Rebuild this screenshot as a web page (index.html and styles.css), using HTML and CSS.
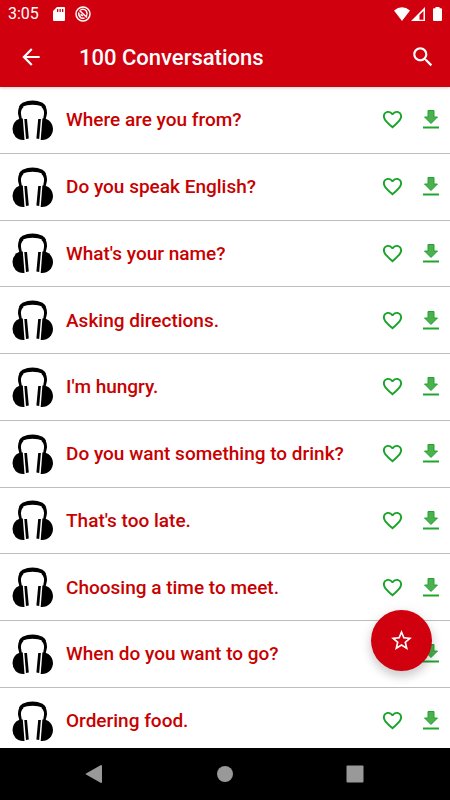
FILE: index.html
```
<!DOCTYPE html>
<html lang="en">

<head>
    <meta charset="UTF-8">
    <meta name="viewport" content="width=device-width, initial-scale=1.0">
    <title>100 Conversations</title>
    <link rel="stylesheet" href="styles.css">
</head>

<body>
    <!-- shared icons -->
    <svg class="sprite" aria-hidden="true">
        <symbol id="icon-headphones" viewBox="0 0 42 42">
            <path d="M7 8Q7.500 5.500 10.500 3.800Q20.500-.8 30.500 3.800Q33.500 5.500 34 8L32 9.500Q29.500 6.800 26 6.300Q20.500 5.400 15 6.300Q11.500 6.800 9 9.500Z" />
            <path d="M8 6.500Q5.300 11 6.300 16L7.500 21H10L9 15Q8.500 11 11.500 8ZM33 6.500Q35.700 11 34.700 16L33.500 21H31L32 15Q32.500 11 29.500 8Z" />
            <path d="M10.800 19.500L12.500 41Q7 41.500 3.500 38Q.5 34.500 .5 30Q.8 24.500 4.500 21.300Q7.500 19 10.800 19.500Z" />
            <path d="M30.400 19.500L28.700 41Q34.200 41.500 37.700 38Q41 34.500 41 30Q40.700 24.500 36.700 21.300Q33.700 19 30.400 19.500Z" />
            <path d="M12.300 20L15 20L16.800 39.500L14 40ZM28.900 20L26.200 20L24.400 39.500L27.200 40Z" />
        </symbol>
        <symbol id="icon-heart" viewBox="0 0 24 24">
            <path d="M16.500 3c-1.740 0-3.410.81-4.500 2.090C10.910 3.810 9.240 3 7.500 3 4.420 3 2 5.420 2 8.500c0 3.780 3.400 6.860 8.550 11.540L12 21.350l1.450-1.320C18.600 15.360 22 12.280 22 8.500 22 5.420 19.580 3 16.500 3zm-4.400 15.550l-.1.1-.1-.1C7.140 14.240 4 11.390 4 8.500 4 6.500 5.500 5 7.500 5c1.540 0 3.040.99 3.570 2.360h1.870C13.460 5.990 14.960 5 16.500 5c2 0 3.500 1.500 3.500 3.500 0 2.890-3.140 5.740-7.900 10.050z" />
        </symbol>
        <symbol id="icon-download" viewBox="0 0 16 19">
            <path class="arrow" d="M5 .5h6v6.500h3.500L8 13.500 1.500 7h3.500z" />
            <path d="M0 16.500h16v2H0z" />
        </symbol>
    </svg>

    <header id="header">
        <div class="status">
            <span class="time">3:05</span>
            <svg class="sd" viewBox="0 0 12 14"><path d="M4 0h7q1 0 1 1v12q0 1-1 1H1q-1 0-1-1V4zM4 2v3h1.300V2zM6.500 2v3h1.300V2zM9 2v3h1.300V2z" fill-rule="evenodd" /></svg>
            <svg class="sync" viewBox="0 0 16 16">
                <circle cx="8" cy="8" r="7" />
                <path d="M4.500 4.500l7.500 7M5.500 3.800Q9 2.500 11.300 5Q12.800 7.500 11.500 10M3.800 6.500Q3.200 10 6 11.800Q7.500 12.600 9.500 12M5.500 8.500l2.500 1.300" />
            </svg>
            <svg class="wifi" viewBox="0 0 16 14"><path d="M0 3.500Q8-3 16 3.500L8 14z" /></svg>
            <svg class="signal" viewBox="0 0 14 14"><path d="M14 0v14H0zM12.500 4L8.500 8v4.700h4z" fill-rule="evenodd" /></svg>
            <svg class="battery" viewBox="0 0 9 14"><path d="M2.500 0h4v1.300H8q1 0 1 1V13q0 1-1 1H1q-1 0-1-1V2.300q0-1 1-1h1.500z" /></svg>
        </div>
        <div class="toolbar">
            <button class="icon-btn" aria-label="Back">
                <svg viewBox="0 0 24 24"><path d="M20 11H7.830l5.590-5.590L12 4l-8 8 8 8 1.410-1.410L7.830 13H20v-2z" /></svg>
            </button>
            <h1>100 Conversations</h1>
            <button class="icon-btn" aria-label="Search">
                <svg viewBox="0 0 24 24"><path d="M15.500 14h-.79l-.28-.27C15.410 12.590 16 11.110 16 9.500 16 5.910 13.090 3 9.500 3S3 5.910 3 9.500 5.910 16 9.500 16c1.610 0 3.090-.59 4.230-1.570l.27.28v.79l5 4.990L20.490 19l-4.990-5zm-6 0C7.010 14 5 11.990 5 9.500S7.010 5 9.500 5 14 7.010 14 9.500 11.990 14 9.500 14z" /></svg>
            </button>
        </div>
    </header>

    <main id="content">
        <ul class="list">
            <li>
                <svg class="headphones"><use href="#icon-headphones" /></svg>
                <a href="#">Where are you from?</a>
                <button class="like" aria-label="Add to favorites"><svg><use href="#icon-heart" /></svg></button>
                <button class="download" aria-label="Download"><svg><use href="#icon-download" /></svg></button>
            </li>
            <li>
                <svg class="headphones"><use href="#icon-headphones" /></svg>
                <a href="#">Do you speak English?</a>
                <button class="like" aria-label="Add to favorites"><svg><use href="#icon-heart" /></svg></button>
                <button class="download" aria-label="Download"><svg><use href="#icon-download" /></svg></button>
            </li>
            <li>
                <svg class="headphones"><use href="#icon-headphones" /></svg>
                <a href="#">What's your name?</a>
                <button class="like" aria-label="Add to favorites"><svg><use href="#icon-heart" /></svg></button>
                <button class="download" aria-label="Download"><svg><use href="#icon-download" /></svg></button>
            </li>
            <li>
                <svg class="headphones"><use href="#icon-headphones" /></svg>
                <a href="#">Asking directions.</a>
                <button class="like" aria-label="Add to favorites"><svg><use href="#icon-heart" /></svg></button>
                <button class="download" aria-label="Download"><svg><use href="#icon-download" /></svg></button>
            </li>
            <li>
                <svg class="headphones"><use href="#icon-headphones" /></svg>
                <a href="#">I'm hungry.</a>
                <button class="like" aria-label="Add to favorites"><svg><use href="#icon-heart" /></svg></button>
                <button class="download" aria-label="Download"><svg><use href="#icon-download" /></svg></button>
            </li>
            <li>
                <svg class="headphones"><use href="#icon-headphones" /></svg>
                <a href="#">Do you want something to drink?</a>
                <button class="like" aria-label="Add to favorites"><svg><use href="#icon-heart" /></svg></button>
                <button class="download" aria-label="Download"><svg><use href="#icon-download" /></svg></button>
            </li>
            <li>
                <svg class="headphones"><use href="#icon-headphones" /></svg>
                <a href="#">That's too late.</a>
                <button class="like" aria-label="Add to favorites"><svg><use href="#icon-heart" /></svg></button>
                <button class="download" aria-label="Download"><svg><use href="#icon-download" /></svg></button>
            </li>
            <li>
                <svg class="headphones"><use href="#icon-headphones" /></svg>
                <a href="#">Choosing a time to meet.</a>
                <button class="like" aria-label="Add to favorites"><svg><use href="#icon-heart" /></svg></button>
                <button class="download" aria-label="Download"><svg><use href="#icon-download" /></svg></button>
            </li>
            <li>
                <svg class="headphones"><use href="#icon-headphones" /></svg>
                <a href="#">When do you want to go?</a>
                <button class="like" aria-label="Add to favorites"><svg><use href="#icon-heart" /></svg></button>
                <button class="download" aria-label="Download"><svg><use href="#icon-download" /></svg></button>
            </li>
            <li>
                <svg class="headphones"><use href="#icon-headphones" /></svg>
                <a href="#">Ordering food.</a>
                <button class="like" aria-label="Add to favorites"><svg><use href="#icon-heart" /></svg></button>
                <button class="download" aria-label="Download"><svg><use href="#icon-download" /></svg></button>
            </li>
        </ul>
        <button class="fab" aria-label="Favorites">
            <svg viewBox="0 0 24 24"><path d="M22 9.240l-7.190-.62L12 2 9.190 8.630 2 9.240l5.460 4.730L5.820 21 12 17.270 18.180 21l-1.630-7.030L22 9.240zM12 15.400l-3.760 2.270 1-4.280-3.320-2.880 4.380-.38L12 6.100l1.710 4.040 4.380.38-3.320 2.880 1 4.280L12 15.400z" /></svg>
        </button>
    </main>

    <nav id="navbar">
        <button aria-label="Back"><svg viewBox="0 0 18 18"><path d="M16 0q1 0 1 1v16q0 1-1 1L1 9.500q-1-.5 0-1z" /></svg></button>
        <button aria-label="Home"><svg viewBox="0 0 18 18"><circle cx="9" cy="9" r="8" /></svg></button>
        <button aria-label="Recent apps"><svg viewBox="0 0 18 18"><rect x=".5" y=".5" width="17" height="17" rx="1" /></svg></button>
    </nav>
</body>

</html>
```
FILE: styles.css
```
* {
    margin: 0;
    padding: 0;
    box-sizing: border-box;
}

body {
    height: 100vh;
    display: flex;
    flex-direction: column;
    overflow: hidden;
    background: #fff;
    font-family: Roboto, sans-serif;
}

button {
    border: none;
    background: none;
    color: inherit;
    cursor: pointer;
}

svg {
    display: block;
    fill: currentColor;
}

.sprite {
    position: absolute;
    width: 0;
    height: 0;
}

#header {
    background: #d0000f;
    color: #fff;
    box-shadow: 0 1px 3px rgba(0, 0, 0, .2);
    z-index: 1;
}

.status {
    height: 27px;
    display: flex;
    align-items: center;
    padding: 0 8px;
}

.time {
    font-size: 16px;
    margin-right: 14px;
}

.sd {
    width: 12px;
    height: 14px;
    margin-right: 10px;
}

.sync {
    width: 16px;
    height: 16px;
    margin-right: auto;
    fill: none;
    stroke: currentColor;
    stroke-width: 1.5;
}

.wifi {
    width: 16px;
    height: 14px;
}

.signal {
    width: 14px;
    height: 14px;
    margin: 0 8px 0 1px;
}

.battery {
    width: 9px;
    height: 14px;
}

.toolbar {
    height: 60px;
    display: flex;
    align-items: center;
    padding: 0 14px 0 18px;
}

.toolbar h1 {
    flex: 1;
    margin-left: 35px;
    font-size: 22px;
    font-weight: 500;
}

.icon-btn svg {
    width: 26px;
    height: 26px;
}

#content {
    flex: 1;
    min-height: 0;
    position: relative;
    overflow: hidden;
}

.list {
    height: 101%;
    display: grid;
    grid-auto-rows: 1fr;
    list-style: none;
}

.list li {
    display: flex;
    align-items: center;
    padding: 0 11px 0 12px;
    border-bottom: 1px solid #bdbdbd;
}

.headphones {
    width: 42px;
    height: 42px;
}

.list a {
    flex: 1;
    margin-left: 12px;
    color: #c80000;
    font-size: 19px;
    font-weight: 500;
    text-decoration: none;
}

.like {
    margin-right: 19px;
    color: #18a428;
}

.like svg {
    width: 23px;
    height: 23px;
}

.download {
    color: #22a52e;
}

.download svg {
    width: 16px;
    height: 19px;
}

.arrow {
    fill: #4caf50;
    stroke: #22a52e;
    stroke-width: 1;
}

.fab {
    position: absolute;
    right: 18px;
    bottom: 77px;
    width: 61px;
    height: 61px;
    display: flex;
    align-items: center;
    justify-content: center;
    border-radius: 50%;
    background: #d0000f;
    color: #fff;
    box-shadow: 0 6px 10px rgba(0, 0, 0, .14), 0 2px 14px rgba(0, 0, 0, .1);
}

.fab svg {
    width: 25px;
    height: 25px;
}

#navbar {
    height: 52px;
    display: flex;
    align-items: center;
    justify-content: space-between;
    padding: 0 86px 0 85px;
    background: #000;
    color: #999;
}

#navbar svg {
    width: 18px;
    height: 18px;
}
```
